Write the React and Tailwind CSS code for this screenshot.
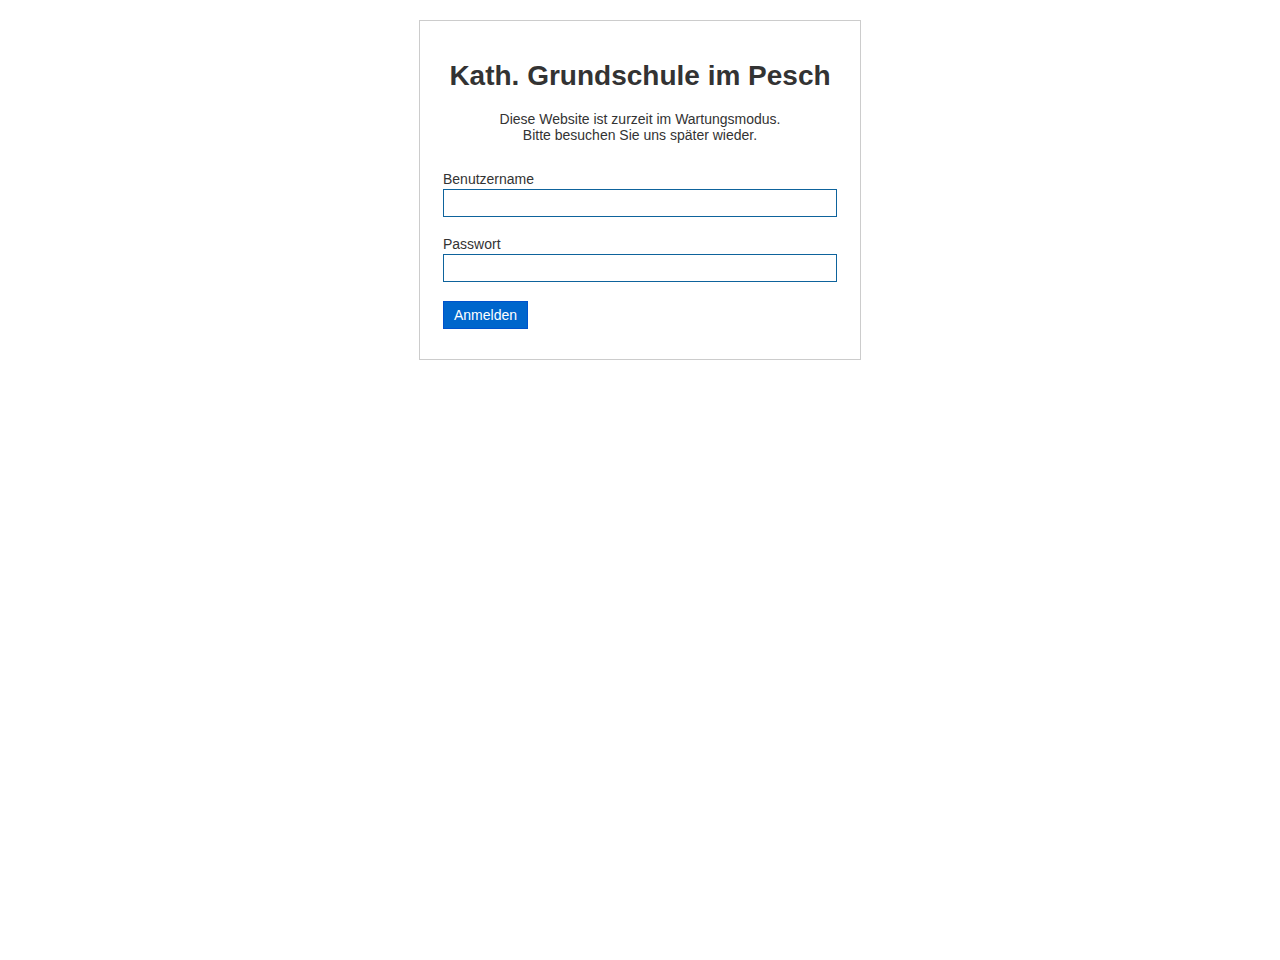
export default function App() {
  return (
    <div className="min-h-[960px] bg-white pt-[20px]" style={{ fontFamily: '"Liberation Sans", Arial, sans-serif' }}>
      <div className="mx-auto w-[442px] border border-[#cccccc] px-[23px] pt-[39px] pb-[30px] text-[#333333]">
        <h1 className="text-center text-[28px] font-bold leading-[32px]">Kath. Grundschule im Pesch</h1>
        <p className="mt-[19px] text-center text-[14px] leading-[16px]">
          Diese Website ist zurzeit im Wartungsmodus.
          <br />
          Bitte besuchen Sie uns später wieder.
        </p>
        <form className="mt-[28px]" onSubmit={(e) => e.preventDefault()}>
          <label className="block text-[14px] leading-[16px]">Benutzername</label>
          <input type="text" className="mt-[2px] block h-[28px] w-full border border-[#0e639c] bg-white px-1 text-[14px] outline-none" />
          <label className="mt-[19px] block text-[14px] leading-[16px]">Passwort</label>
          <input type="password" className="mt-[2px] block h-[28px] w-full border border-[#0e639c] bg-white px-1 text-[14px] outline-none" />
          <button type="submit" className="mt-[19px] block h-[28px] border border-[#0052cc] bg-[#0066cc] px-[10px] text-[14px] leading-[16px] text-white">
            Anmelden
          </button>
        </form>
      </div>
    </div>
  );
}
